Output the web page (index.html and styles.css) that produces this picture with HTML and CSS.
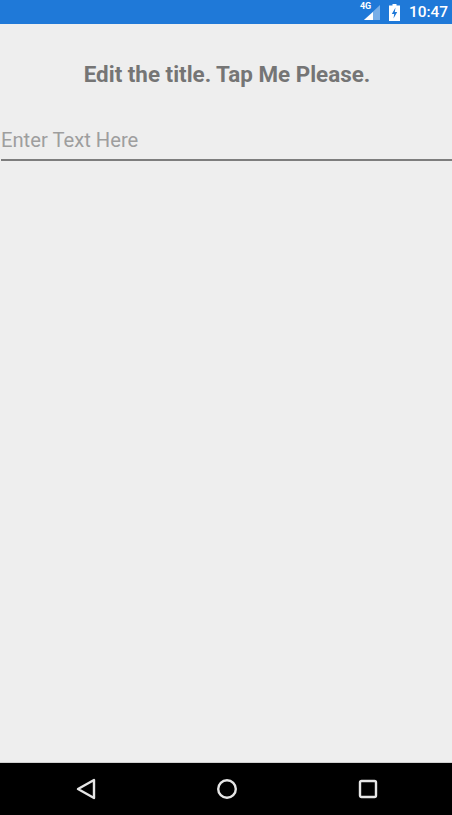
FILE: index.html
```html
<!DOCTYPE html>
<html>
<head>
    <title>Edit the title</title>
    <link rel="stylesheet" href="styles.css">
</head>
<body>
    <div class="screen">
        <div class="status-bar">
            <div class="signal">
                <span class="net-label">4G</span>
                <svg class="signal-icon" width="18" height="15" viewBox="0 0 18 15">
                    <polygon points="17,0 17,15 1,15" fill="#fff" fill-opacity="0.4"/>
                    <polygon points="10,7 10,15 1,15" fill="#fff"/>
                </svg>
            </div>
            <svg class="battery-icon" width="11" height="17" viewBox="0 0 11 17">
                <path d="M3.5 0h4v1.5H11V17H0V1.5h3.5z" fill="#fff"/>
                <path d="M6.5 3.5 2.8 10h2.4l-.7 4.5L8.2 8H5.8z" fill="#1f79d8"/>
            </svg>
            <span class="clock">10:47</span>
        </div>

        <div class="content">
            <h1 class="title">Edit the title. Tap Me Please.</h1>
            <input class="title-input" type="text" placeholder="Enter Text Here">
        </div>

        <div class="nav-bar">
            <svg width="20" height="22" viewBox="0 0 20 22">
                <polygon points="18,2 18,20 2,11" fill="none" stroke="#e6e6e6" stroke-width="2.4" stroke-linejoin="round"/>
            </svg>
            <svg width="20" height="20" viewBox="0 0 20 20">
                <circle cx="10" cy="10" r="8.8" fill="none" stroke="#e6e6e6" stroke-width="2.4"/>
            </svg>
            <svg width="20" height="20" viewBox="0 0 20 20">
                <rect x="2" y="2" width="16" height="16" rx="1.5" fill="none" stroke="#e6e6e6" stroke-width="2.4"/>
            </svg>
        </div>
    </div>
</body>
</html>
```

FILE: styles.css
```css
html, body {
    margin: 0;
    height: 100%;
}

body {
    font-family: Roboto, "Liberation Sans", sans-serif;
    background-color: #eeeeee;
}

.screen {
    display: flex;
    flex-direction: column;
    height: 815px;
}

.status-bar {
    display: flex;
    align-items: center;
    justify-content: flex-end;
    gap: 8px;
    height: 24px;
    flex-shrink: 0;
    padding-right: 4px;
    background-color: #1f79d8;
    color: #fff;
}

.signal {
    position: relative;
    display: flex;
    width: 18px;
    height: 15px;
}

.net-label {
    position: absolute;
    top: -4px;
    left: -3px;
    font-size: 9px;
    font-weight: bold;
}

.clock {
    margin-left: 1px;
    font-size: 15.4px;
    font-weight: 500;
}

.content {
    flex: 1;
    display: flex;
    flex-direction: column;
    padding-left: 1px;
}

.title {
    margin: 36px 0 0 0;
    padding-left: 1px;
    font-size: 22.4px;
    line-height: 28px;
    font-weight: bold;
    text-align: center;
    color: #757575;
}

.title-input {
    margin-top: 25px;
    height: 48px;
    padding: 7px 0 0 0;
    box-sizing: border-box;
    border: none;
    border-bottom: 2px solid #7d7d7d;
    background: transparent;
    font-family: inherit;
    font-size: 20.2px;
    outline: none;
}

.title-input::placeholder {
    color: #9e9e9e;
    opacity: 1;
}

.nav-bar {
    display: flex;
    align-items: center;
    justify-content: center;
    gap: 121px;
    height: 53px;
    flex-shrink: 0;
    padding-left: 1px;
    border-top: 1px solid #cfcfcf;
    box-sizing: border-box;
    background-color: #000;
}
```
